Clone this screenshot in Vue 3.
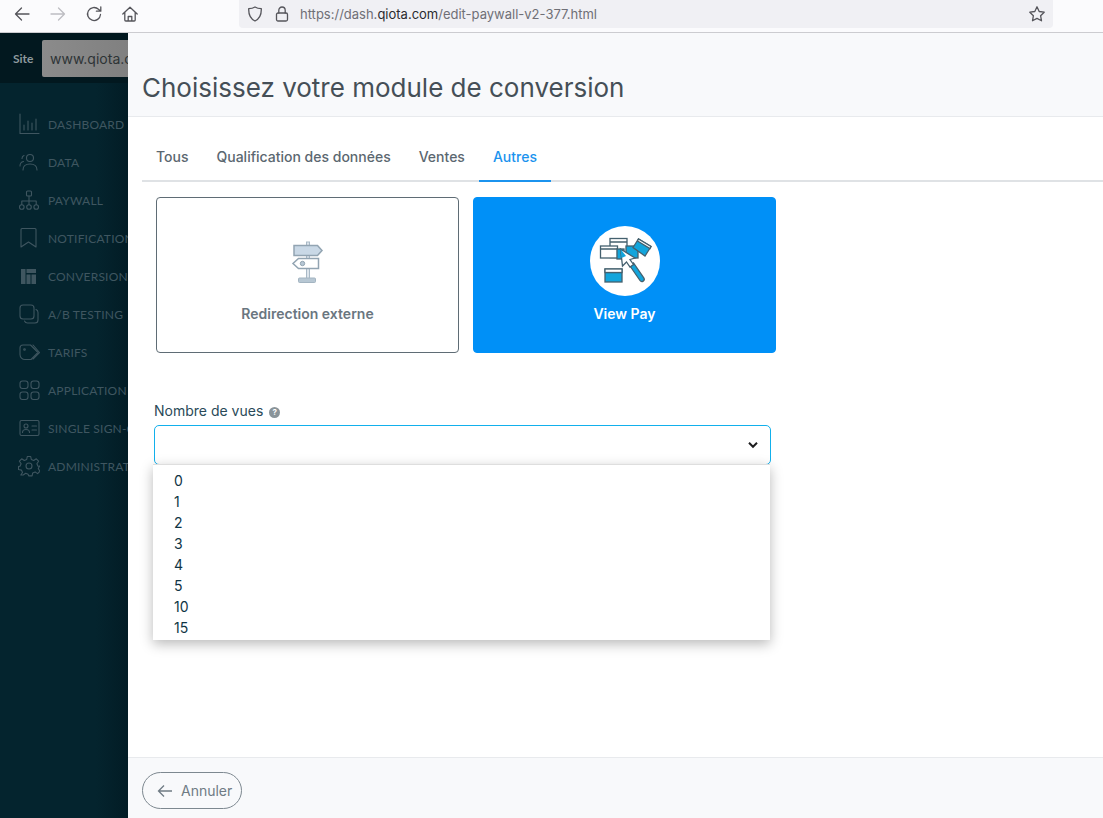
<script setup>
const navItems = [
  { label: 'DASHBOARD', icon: 'dash' },
  { label: 'DATA', icon: 'data' },
  { label: 'PAYWALL', icon: 'pay' },
  { label: 'NOTIFICATIONS', icon: 'notif' },
  { label: 'CONVERSION', icon: 'conv' },
  { label: 'A/B TESTING', icon: 'ab' },
  { label: 'TARIFS', icon: 'tag' },
  { label: 'APPLICATION', icon: 'app' },
  { label: 'SINGLE SIGN-ON', icon: 'sso' },
  { label: 'ADMINISTRATION', icon: 'gear' }
]
const tabs = ['Tous', 'Qualification des données', 'Ventes', 'Autres']
const options = ['0', '1', '2', '3', '4', '5', '10', '15']
</script>

<template>
  <div class="page">
    <header class="browser">
      <div class="nav-icons">
        <svg class="bi" width="18" height="18" viewBox="0 0 18 18"><path d="M16 9H2.5M8.5 3 2.5 9l6 6" /></svg>
        <svg class="bi off" width="18" height="18" viewBox="0 0 18 18"><path d="M2 9h13.5M9.5 3l6 6-6 6" /></svg>
        <svg class="bi" width="18" height="18" viewBox="0 0 18 18"><path d="M15.5 9.5A6.5 6.5 0 1 1 13.5 4.3L15.5 6M15.8 1.8V6.2H11.4" /></svg>
        <svg class="bi" width="18" height="18" viewBox="0 0 18 18"><path d="M1.8 9 9 2.2 16.2 9M3.8 7.5V15a1 1 0 0 0 1 1h8.4a1 1 0 0 0 1-1V7.5M7.2 16v-4.5h3.6V16" /></svg>
      </div>
      <div class="urlbar">
        <svg class="bi" width="18" height="18" viewBox="0 0 18 18"><path d="M9 2c2 1.2 4 1.6 6.3 1.7.2 5.5-1.4 10-6.3 12.3C4.100 13.700 2.500 9.200 2.700 3.700 5 3.600 7 3.200 9 2Z" /></svg>
        <svg class="bi lock" width="16" height="18" viewBox="0 0 16 18"><rect x="2.500" y="8" width="11" height="8" rx="1.500" /><path d="M4.800 8V5.200a3.200 3.200 0 0 1 6.400 0V8" /></svg>
        <span class="url">https://dash.<b>qiota.com</b>/edit-paywall-v2-377.html</span>
        <svg class="bi star" width="18" height="18" viewBox="0 0 18 18"><path d="m9 1.800 2.200 4.700 5 .7-3.600 3.500.9 5.100L9 13.400l-4.500 2.400.9-5.100L1.800 7.200l5-.7Z" /></svg>
      </div>
    </header>

    <div class="body">
      <aside class="sidebar">
        <div class="site">
          <span class="site-label">Site</span>
          <span class="site-input">www.qiota.com</span>
        </div>
        <nav class="nav">
          <div v-for="item in navItems" :key="item.label" class="nav-item">
            <svg class="ni" width="22" height="22" viewBox="0 0 22 22">
              <template v-if="item.icon === 'dash'"><path d="M2 1v19.500h19M6 17v-5M10 17V8M14 17v-7M18 17V6" /></template>
              <template v-else-if="item.icon === 'data'"><circle cx="12" cy="7" r="3.500" /><path d="M5 19c0-4 3-6 7-6s7 2 7 6M2 15c0-2.500 1-4 3.500-4.500M6 4.500C4.500 5 4 6 4 7.500" /></template>
              <template v-else-if="item.icon === 'pay'"><rect x="8.500" y="2" width="5" height="5" rx="1" /><circle cx="3.800" cy="18" r="2.300" /><circle cx="11" cy="18" r="2.300" /><circle cx="18.200" cy="18" r="2.300" /><path d="M11 7v8.500M3.800 15.500V12h14.400v3.500" /></template>
              <template v-else-if="item.icon === 'notif'"><path d="M3 2.500a1 1 0 0 1 1-1h13a1 1 0 0 1 1 1V20l-7.500-5L3 20Z" /></template>
              <template v-else-if="item.icon === 'conv'"><path class="solid" d="M3 4h4.500v15H3ZM8.500 4H18v4H8.500ZM8.500 9.500h4v9.500h-4ZM13.500 9.500H18v9.500h-4.500Z" /></template>
              <template v-else-if="item.icon === 'ab'"><rect x="2" y="2" width="14" height="14" rx="3" /><path d="M18 6.500c1.200.5 2 1.500 2 3V17a3 3 0 0 1-3 3H9.500c-1.500 0-2.500-.8-3-2" /></template>
              <template v-else-if="item.icon === 'tag'"><path d="M2 7a3 3 0 0 1 3-3h7.500l7.500 7.500-7 7H7a5 5 0 0 1-5-5Z" /><path d="m15 4 6.500 7.500L15 18" /><circle cx="6.500" cy="8.500" r=".8" /></template>
              <template v-else-if="item.icon === 'app'"><rect x="2" y="2" width="8" height="7.500" rx="2.500" /><rect x="13" y="2" width="8" height="7.500" rx="2.500" /><rect x="2" y="13" width="8" height="7.500" rx="2.500" /><rect x="13" y="13" width="8" height="7.500" rx="2.500" /></template>
              <template v-else-if="item.icon === 'sso'"><rect x="2" y="3.500" width="19" height="15" rx="1.500" /><circle cx="8" cy="9" r="2" /><path d="M4.500 15.500c0-2 1.500-3 3.500-3s3.500 1 3.500 3M14 9h4.500M14 13h4.500" /></template>
              <template v-else><circle cx="11" cy="11" r="3" /><path d="M9.300 1.500h3.400l.6 3 2.400 1 2.600-1.700 2.300 2.400-1.700 2.500 1 2.400 3 .6-.1 0M9.300 1.500l-.6 3-2.400 1-2.600-1.700-2.300 2.400 1.700 2.500-1 2.400-1.600.4v3l3 .6 1 2.400-1.700 2.500 2.400 0 2.500-1.700 2.400 1 .6 1.600h3.400l.6-3 2.400-1 2.500 1.700 2.400-2.400-1.700-2.500 1-2.400 1.600-.6v-3" /></template>
            </svg>
            <span class="nav-label">{{ item.label }}</span>
          </div>
        </nav>
      </aside>

      <main class="main">
        <div class="head"><h1>Choisissez votre module de conversion</h1></div>

        <div class="tabs">
          <span v-for="(t, i) in tabs" :key="t" class="tab" :class="{ active: i === 3 }">{{ t }}</span>
        </div>

        <div class="cards">
          <div class="card">
            <svg width="36" height="44" viewBox="0 0 36 44" class="art">
              <rect x="16.500" y="1" width="3" height="39" fill="#dde5ec" stroke="#a9b9c6" />
              <path d="M4 4.500h23.500l4.500 5-4.500 5H4Z" fill="#c9d8e6" stroke="#92a4b2" stroke-width="1.500" />
              <path d="M28.500 17.500H8.500L3 22.500l5.500 5h20Z" fill="#fff" stroke="#92a4b2" stroke-width="1.500" />
              <circle cx="12.500" cy="22.500" r="2.200" fill="#b6c6d4" stroke="#92a4b2" />
              <rect x="8.500" y="37" width="17" height="4.500" rx="1" fill="#b7c7d3" stroke="#a3b4c1" />
            </svg>
            <span class="card-title">Redirection externe</span>
          </div>
          <div class="card selected">
            <div class="disc">
              <svg width="56" height="50" viewBox="0 0 56 50">
                <g stroke="#44606e" stroke-width="1.300">
                  <rect x="13" y="2.500" width="17" height="19" fill="#fff" />
                  <rect x="3.500" y="10" width="17" height="12" fill="#fff" />
                  <path d="M3.500 13h17M13 6h17" fill="none" />
                  <rect x="29" y="10" width="12" height="12" fill="#12a5dc" />
                  <rect x="20" y="13" width="7" height="10" fill="#12a5dc" />
                  <path d="m39 11.500 5.500-8.500L57 10.500l-6 9.500Z" transform="translate(-3 0)" fill="#12a5dc" />
                  <path d="m41.500 3 12.500 7.500-1 2-12.500-7.500Z" fill="#fff" />
                  <rect x="8" y="33" width="17" height="13" fill="#12a5dc" />
                  <path d="M8 36.500h17" fill="none" />
                  <rect x="8" y="33" width="17" height="3.500" fill="#fff" />
                  <path d="m33 30 10 14.500a2.300 2.300 0 0 0 3.800-2.600L36.500 27Z" fill="#12a5dc" />
                  <path d="m23.500 13 2 17 4-4 3.500 5 3.500-2.500-3.500-5 5-1.500Z" fill="#fff" />
                  <path d="m23.500 13 5.500 7-4.500 2Z" fill="#12a5dc" stroke="none" />
                </g>
              </svg>
            </div>
            <span class="card-title">View Pay</span>
          </div>
        </div>

        <div class="field">
          <label class="label">Nombre de vues
            <span class="help">?</span>
          </label>
          <div class="select">
            <svg width="10" height="8" viewBox="0 0 10 8" class="chev"><path d="M1 1.800 5 5.800 9 1.800" /></svg>
            <ul class="menu">
              <li v-for="o in options" :key="o">{{ o }}</li>
            </ul>
          </div>
        </div>

        <div class="foot">
          <button class="cancel">
            <svg width="16" height="14" viewBox="0 0 16 14"><path d="M15 7H1.500M7 1.500 1.500 7 7 12.500" /></svg>
            Annuler
          </button>
        </div>
      </main>
    </div>
  </div>
</template>

<style>
html, body { margin: 0; background: #fff; }
</style>

<style scoped>
.page {
  width: 1103px;
  height: 818px;
  display: flex;
  flex-direction: column;
  overflow: hidden;
  font-family: Inter, "Liberation Sans", sans-serif;
}
.browser {
  height: 32px;
  flex: none;
  box-sizing: content-box;
  border-bottom: 1px solid #ccccd0;
  background: #fbfbfd;
  display: flex;
  align-items: flex-start;
}
.nav-icons {
  width: 239px;
  height: 28px;
  display: flex;
  align-items: center;
  gap: 18px;
  padding-left: 13px;
  box-sizing: border-box;
}
.bi { fill: none; stroke: #55555b; stroke-width: 1.300; stroke-linecap: round; stroke-linejoin: round; flex: none; }
.bi.off { stroke: #bdbdc2; }
.urlbar {
  width: 814px;
  height: 28px;
  background: #f0f0f4;
  border-radius: 0 0 4px 4px;
  display: flex;
  align-items: center;
  padding: 0 7px 0 7px;
  box-sizing: border-box;
}
.lock { margin-left: 10px; }
.url {
  margin-left: 10px;
  font-size: 13px;
  color: #6f6f76;
  flex: 1;
  font-family: Inter, sans-serif;
}
.url b { font-weight: 400; color: #2a2a2e; }
.body { flex: 1; display: flex; min-height: 0; }
.sidebar {
  width: 128px;
  flex: none;
  background: linear-gradient(90deg, #04242e 0%, #04242e 75%, #021c25 100%);
  overflow: hidden;
  position: relative;
}
.site {
  height: 50px;
  background: #02181f;
  display: flex;
  align-items: center;
  padding-left: 13px;
  white-space: nowrap;
}
.site-label {
  font-family: Lato, sans-serif;
  font-size: 12px;
  color: #8d999d;
  width: 29px;
  flex: none;
  font-weight: 700;
}
.site-input {
  background: linear-gradient(90deg, #8b8b8b, #7b7b7b);
  border-radius: 2px;
  height: 37px;
  line-height: 37px;
  padding-left: 8px;
  width: 120px;
  flex: none;
  font-size: 14px;
  color: #2e3436;
}
.nav { padding-top: 22px; }
.nav-item {
  height: 38px;
  display: flex;
  align-items: center;
  padding-left: 18px;
  white-space: nowrap;
}
.ni { fill: none; stroke: #3f5660; stroke-width: 1.100; flex: none; stroke-linejoin: round; stroke-linecap: round; }
.ni .solid { fill: #3f5660; stroke: none; }
.nav-label {
  font-family: Lato, sans-serif;
  font-size: 12px;
  letter-spacing: .2px;
  color: #3f5660;
  margin-left: 8px;
}
.main {
  flex: 1;
  min-width: 0;
  background: #fff;
  display: flex;
  flex-direction: column;
  position: relative;
}
.head {
  height: 84px;
  flex: none;
  background: #f8f9fb;
  border-bottom: 1px solid #e8eaed;
  display: flex;
  align-items: flex-end;
  padding: 0 0 10px 14px;
  box-sizing: border-box;
}
h1 {
  margin: 0;
  font-size: 26px;
  line-height: 36px;
  font-weight: 400;
  color: #454f57;
}
.tabs {
  margin: 0 0 0 14px;
  height: 65px;
  flex: none;
  display: flex;
  align-items: stretch;
  border-bottom: 2px solid #dfe2e5;
  box-sizing: border-box;
}
.tab {
  padding: 32px 14px 0;
  font-size: 14px;
  line-height: 16px;
  font-weight: 500;
  color: #5b6770;
  margin-bottom: -2px;
  border-bottom: 2px solid transparent;
}
.tab.active { color: #1b93ee; border-bottom-color: #1b93ee; }
.cards {
  display: flex;
  gap: 14px;
  padding: 15px 0 0 28px;
  flex: none;
}
.card {
  width: 303px;
  height: 156px;
  box-sizing: border-box;
  border: 1px solid #5f6c75;
  border-radius: 4px;
  display: flex;
  flex-direction: column;
  align-items: center;
  color: #6a767f;
  background: #fff;
}
.art { margin-top: 43px; height: 44px; }
.card-title {
  font-size: 14px;
  font-weight: 600;
  line-height: 18px;
  position: absolute;
  margin-top: 107px;
}
.card.selected { background: #0090f7; border-color: #0090f7; color: #fff; }
.disc {
  width: 70px;
  height: 70px;
  border-radius: 50%;
  background: #fff;
  margin-top: 28px;
  display: flex;
  align-items: center;
  justify-content: center;
}
.field { margin: 49px 0 0 26px; width: 617px; flex: none; }
.label {
  display: flex;
  align-items: center;
  gap: 6px;
  font-size: 14px;
  line-height: 18px;
  color: #2a4a58;
  height: 18px;
}
.help {
  width: 11px;
  height: 11px;
  border-radius: 50%;
  background: #8a9499;
  color: #fff;
  font-size: 8px;
  line-height: 11px;
  font-weight: 700;
  text-align: center;
  margin-top: 2px;
}
.select {
  position: relative;
  margin-top: 5px;
  height: 40px;
  box-sizing: border-box;
  border: 1px solid #12b0ec;
  border-radius: 5px;
  width: 617px;
  display: flex;
  align-items: center;
  justify-content: flex-end;
  padding-right: 12px;
}
.chev { fill: none; stroke: #1d1d1f; stroke-width: 2; }
.menu {
  position: absolute;
  left: -2px;
  top: 38px;
  width: 617px;
  height: 176px;
  box-sizing: border-box;
  margin: 0;
  padding: 5px 0 0 21px;
  list-style: none;
  background: #fff;
  border-top: 1px solid #dedede;
  box-shadow: 0 4px 12px rgba(0, 0, 0, .28);
  font-size: 14px;
  line-height: 21px;
  color: #0f3444;
}
.foot {
  margin-top: auto;
  height: 61px;
  flex: none;
  box-sizing: border-box;
  background: #f8f9fb;
  border-top: 1px solid #e8eaed;
  display: flex;
  align-items: flex-start;
  padding: 14px 0 0 14px;
}
.cancel {
  width: 100px;
  height: 37px;
  border: 1px solid #7d8890;
  border-radius: 19px;
  background: transparent;
  font: 400 14px Inter, sans-serif;
  color: #6f7b84;
  display: flex;
  align-items: center;
  gap: 8px;
  padding: 0 0 0 14px;
}
.cancel svg { fill: none; stroke: #6f7b84; stroke-width: 1.300; }
</style>
